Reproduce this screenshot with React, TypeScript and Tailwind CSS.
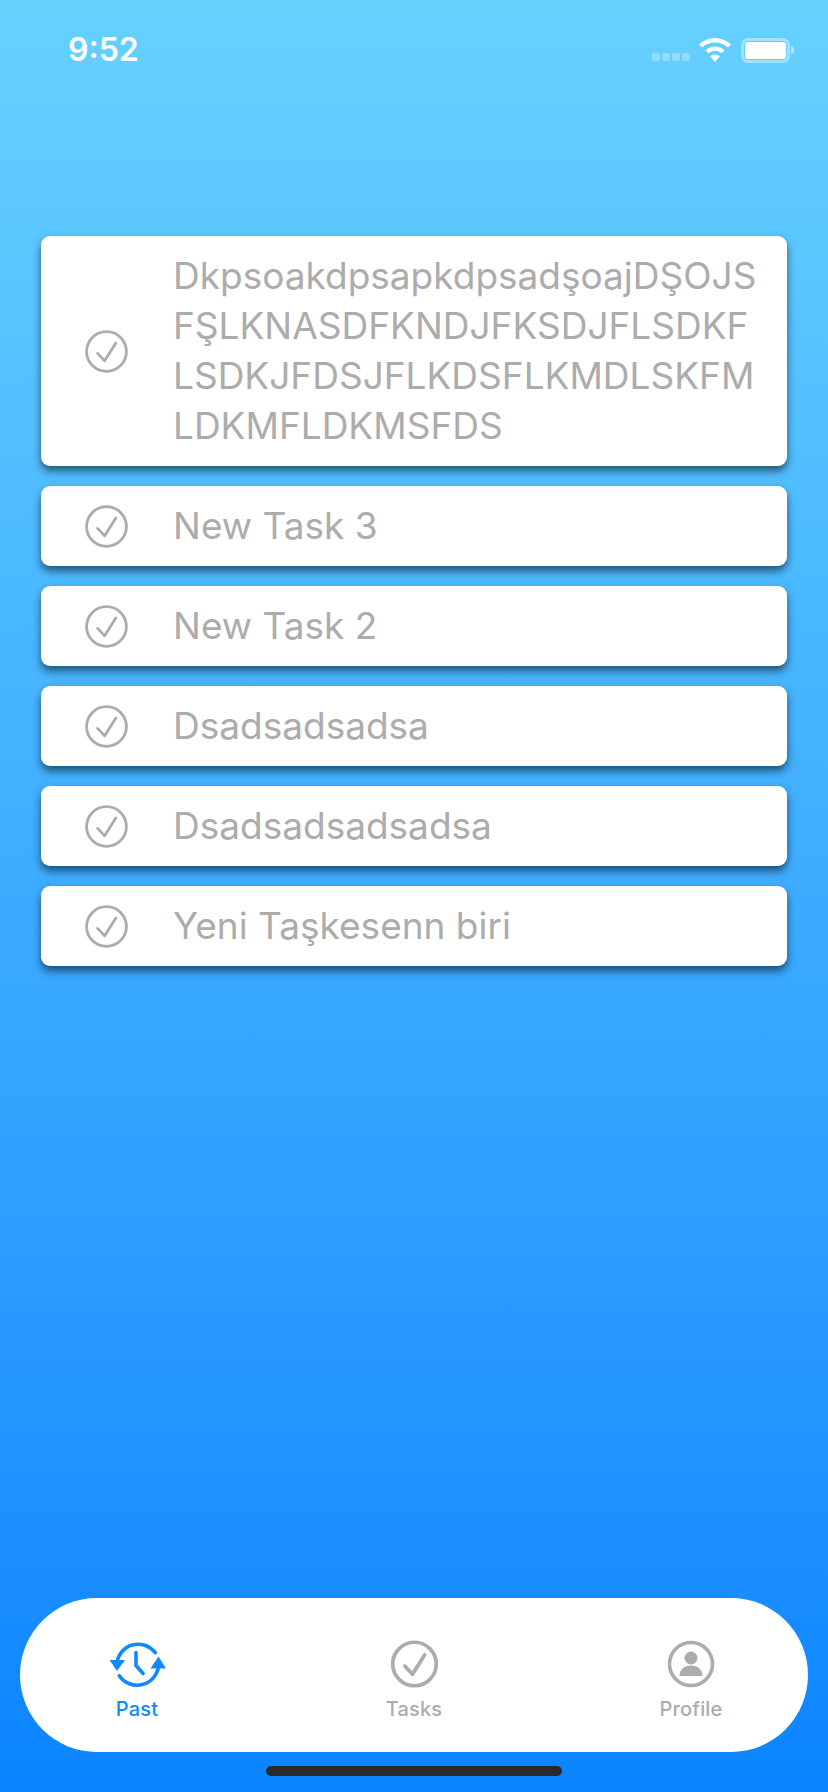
import React from 'react';

const tasks = ['New Task 3', 'New Task 2', 'Dsadsadsadsa', 'Dsadsadsadsadsa', 'Yeni Taşkesenn biri'];

const CheckCircle = ({ className, weight = 3 }: { className?: string; weight?: number }) => (
  <svg viewBox="0 0 46 46" className={className} fill="none" stroke="currentColor">
    <circle cx="23" cy="23" r="21.3" strokeWidth={weight} />
    <path d="M13.500 25l7.500 8L33 14" strokeWidth={weight} strokeLinecap="round" strokeLinejoin="round" />
  </svg>
);

const TaskCard = ({ title }: { title: string }) => (
  <div className="flex items-center bg-white rounded-[9px] shadow-[0_5px_8px_rgba(0,0,0,0.55)] min-h-20 pl-[44px] pr-5 py-[15px]">
    <CheckCircle className="w-[43px] h-[43px] shrink-0 text-[#acacac]" />
    <div className="ml-[45px] min-w-0 break-all text-[37px] leading-[50px] text-[#acacac]">{title}</div>
  </div>
);

const TabItem = ({ label, active, children }: { label: string; active?: boolean; children: React.ReactNode }) => (
  <div className={`w-[120px] flex flex-col items-center ${active ? 'text-[#1089ff]' : 'text-[#acacac]'}`}>
    {children}
    <span className="mt-[9px] text-[20px] leading-6 font-medium tracking-[0.2px]">{label}</span>
  </div>
);

export default function App() {
  return (
    <div className="relative w-[828px] h-[1792px] overflow-hidden flex flex-col bg-gradient-to-b from-[#66d1ff] to-[#0a84ff] font-['Inter','Liberation_Sans',sans-serif]">
      {/* status bar */}
      <div className="h-[236px] shrink-0 pl-[68px] pr-[34px] pt-[30px]">
        <div className="flex items-center justify-between">
          <span className="text-[32px] leading-[40px] font-semibold text-white">9:52</span>
          <div className="flex items-center">
            <div className="flex gap-[2px] mt-[13px] mr-[9px] opacity-30">
              <span className="w-[8px] h-[8px] rounded-[2px] bg-white" />
              <span className="w-[8px] h-[8px] rounded-[2px] bg-white" />
              <span className="w-[8px] h-[8px] rounded-[2px] bg-white" />
              <span className="w-[8px] h-[8px] rounded-[2px] bg-white" />
            </div>
            <svg viewBox="0 0 32 24" className="w-[32px] h-[24px] mr-[10px]" fill="white">
              <path d="M16 0C10 0 4.500 2.300 0 6.500l3 3C6.500 6.200 11 4.500 16 4.500s9.500 1.700 13 5l3-3C27.500 2.300 22 0 16 0z" />
              <path d="M16 8.500c-3.600 0-6.900 1.400-9.500 3.700l3 3c1.800-1.600 4-2.500 6.500-2.500s4.700.9 6.500 2.500l3-3C22.900 9.900 19.600 8.500 16 8.500z" />
              <path d="M16 16.500c-1.900 0-3.500.7-4.800 1.800L16 24l4.800-5.700C19.500 17.200 17.900 16.500 16 16.500z" />
            </svg>
            <div className="w-[49px] h-[25px] rounded-[7px] border-[3px] border-white/40 p-[1px]">
              <div className="w-full h-full rounded-[3px] bg-white" />
            </div>
            <div className="w-[3px] h-[8px] ml-[1px] rounded-r-full bg-white/50" />
          </div>
        </div>
      </div>

      {/* task list */}
      <div className="flex flex-col gap-5 mx-[41px] flex-1">
        <TaskCard title="DkpsoakdpsapkdpsadşoajDŞOJSFŞLKNASDFKNDJFKSDJFLSDKFLSDKJFDSJFLKDSFLKMDLSKFMLDKMFLDKMSFDS" />
        {tasks.map((t, i) => (
          <TaskCard key={i} title={t} />
        ))}
      </div>

      {/* tab bar */}
      <div className="h-[154px] shrink-0 mx-5 bg-white rounded-[77px] flex items-start justify-between px-[57px] pt-[42px]">
        <TabItem label="Past" active>
          <svg viewBox="0 0 57 48" className="w-[57px] h-[48px]" fill="none" stroke="currentColor" strokeWidth="3.6" strokeLinecap="round">
            <path d="M46.300 12.700A21.500 21.500 0 0 0 8 22" />
            <path d="M10.300 35.700A21.500 21.500 0 0 0 49.500 26" />
            <path d="M27 12.500v13l7 8" />
            <path d="M0.500 20h15.500l-8 11z" fill="currentColor" stroke="none" />
            <path d="M41.500 28.500h15.500l-7.500-12z" fill="currentColor" stroke="none" />
          </svg>
        </TabItem>
        <TabItem label="Tasks">
          <CheckCircle className="w-[47px] h-[48px]" weight={3.6} />
        </TabItem>
        <TabItem label="Profile">
          <svg viewBox="0 0 48 48" className="w-[48px] h-[48px]" fill="none">
            <circle cx="24" cy="24" r="21.500" stroke="currentColor" strokeWidth="3.6" />
            <circle cx="24" cy="18" r="6.500" fill="currentColor" />
            <path d="M12.500 36c0-6.500 5-10.500 11.500-10.500S35.500 29.500 35.500 36z" fill="currentColor" />
          </svg>
        </TabItem>
      </div>

      {/* home indicator */}
      <div className="h-10 shrink-0 flex justify-center pt-[14px]">
        <div className="w-[296px] h-[10px] rounded-full bg-[#2a2a2a]" />
      </div>
    </div>
  );
}
